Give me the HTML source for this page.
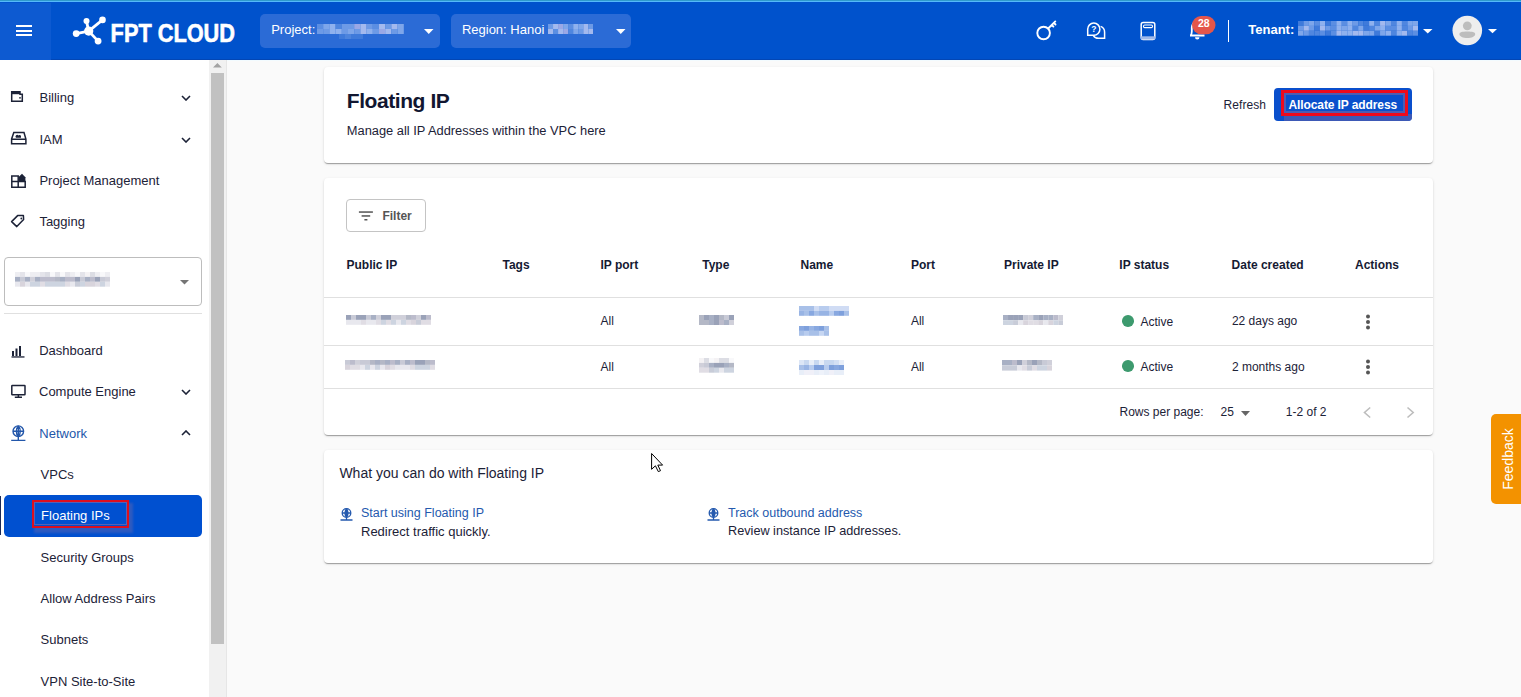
<!DOCTYPE html><html><head><meta charset="utf-8"><style>
*{margin:0;padding:0;box-sizing:border-box}
html,body{width:1521px;height:697px;overflow:hidden;background:#fafafa;font-family:"Liberation Sans",sans-serif}
.t{position:absolute;white-space:nowrap}
.r{position:absolute}
.card{position:absolute;background:#fff;border-radius:4px;box-shadow:0 2px 1px -1px rgba(0,0,0,.2),0 1px 1px 0 rgba(0,0,0,.14),0 1px 3px 0 rgba(0,0,0,.12)}
</style></head><body>
<div class="r" style="left:0px;top:0px;width:1521px;height:1px;background:#2f9acb;"></div>
<div class="r" style="left:0px;top:1px;width:1521px;height:1px;background:#55b9fa;"></div>
<div class="r" style="left:0px;top:2px;width:1521px;height:58px;background:#0052cc;"></div>
<div class="r" style="left:0px;top:59px;width:1521px;height:1px;background:#0346b4;"></div>
<div class="r" style="left:0px;top:60px;width:1521px;height:1px;background:#f2fbff;"></div>
<div class="r" style="left:0px;top:3px;width:51px;height:57px;background:#0d5ad1;"></div>
<div class="r" style="left:16px;top:25.4px;width:16px;height:2.1px;background:#fff;"></div>
<div class="r" style="left:16px;top:29.9px;width:16px;height:2.1px;background:#fff;"></div>
<div class="r" style="left:16px;top:34.2px;width:16px;height:2.1px;background:#fff;"></div>
<svg class="r" style="left:70px;top:14px" width="40" height="34" viewBox="70 14 40 34">
<g stroke="#fff" stroke-width="2.8" fill="none"><line x1="88.7" y1="31.1" x2="86.5" y2="21.1"/><line x1="88.7" y1="31.1" x2="102.5" y2="19.9"/><line x1="88.7" y1="31.1" x2="76.2" y2="33.6"/><line x1="88.7" y1="31.1" x2="98.1" y2="41.1"/></g>
<g fill="#fff"><circle cx="88.7" cy="31.1" r="4.6"/><circle cx="86.5" cy="21.1" r="3"/><circle cx="102.5" cy="19.9" r="3.3"/><circle cx="76.2" cy="33.6" r="3.4"/><circle cx="98.1" cy="41.1" r="3.4"/></g></svg>
<svg class="r" style="left:108px;top:14px" width="132" height="34"><text x="2.6" y="27.75" font-family="Liberation Sans" font-weight="700" font-size="25.5" fill="#fff" stroke="#fff" stroke-width="0.6" textLength="124.4" lengthAdjust="spacingAndGlyphs">FPT CLOUD</text></svg>
<div class="r" style="left:260px;top:14px;width:180px;height:34px;background:#2b6bd6;border-radius:5px"></div>
<div class="t" style="left:271.2px;top:22.60px;font-size:13px;line-height:13px;font-weight:400;color:#fff;">Project:</div>
<svg class="r" style="left:317px;top:23.6px" width="86.8" height="10" opacity="1.0"><rect x="0.0" y="0" width="6.2" height="5" fill="#5b8ee2"/><rect x="6.2" y="0" width="6.2" height="5" fill="#7ea6ea"/><rect x="12.4" y="0" width="6.2" height="5" fill="#8fb1ee"/><rect x="18.6" y="0" width="6.2" height="5" fill="#4f86df"/><rect x="24.8" y="0" width="6.2" height="5" fill="#6d9ae6"/><rect x="31.0" y="0" width="6.2" height="5" fill="#6d9ae6"/><rect x="37.2" y="0" width="6.2" height="5" fill="#9aa8e6"/><rect x="43.4" y="0" width="6.2" height="5" fill="#a3b9ee"/><rect x="49.6" y="0" width="6.2" height="5" fill="#6d9ae6"/><rect x="55.800000000000004" y="0" width="6.2" height="5" fill="#5b8ee2"/><rect x="62.0" y="0" width="6.2" height="5" fill="#a3b9ee"/><rect x="68.2" y="0" width="6.2" height="5" fill="#6d9ae6"/><rect x="74.4" y="0" width="6.2" height="5" fill="#a3b9ee"/><rect x="80.60000000000001" y="0" width="6.2" height="5" fill="#7ea6ea"/><rect x="0.0" y="5" width="6.2" height="5" fill="#6d9ae6"/><rect x="6.2" y="5" width="6.2" height="5" fill="#6d9ae6"/><rect x="12.4" y="5" width="6.2" height="5" fill="#8fb1ee"/><rect x="18.6" y="5" width="6.2" height="5" fill="#8fb1ee"/><rect x="24.8" y="5" width="6.2" height="5" fill="#6d9ae6"/><rect x="31.0" y="5" width="6.2" height="5" fill="#7ea6ea"/><rect x="37.2" y="5" width="6.2" height="5" fill="#6d9ae6"/><rect x="43.4" y="5" width="6.2" height="5" fill="#a3b9ee"/><rect x="49.6" y="5" width="6.2" height="5" fill="#8fb1ee"/><rect x="55.800000000000004" y="5" width="6.2" height="5" fill="#6d9ae6"/><rect x="62.0" y="5" width="6.2" height="5" fill="#9aa8e6"/><rect x="68.2" y="5" width="6.2" height="5" fill="#a3b9ee"/><rect x="74.4" y="5" width="6.2" height="5" fill="#6d9ae6"/><rect x="80.60000000000001" y="5" width="6.2" height="5" fill="#7ea6ea"/></svg>
<svg class="r" style="left:339px;top:33.6px" width="24" height="5" opacity="1.0"><rect x="0" y="0" width="6" height="5" fill="#3f7ada"/><rect x="6" y="0" width="6" height="5" fill="#4d84dd"/><rect x="12" y="0" width="6" height="5" fill="#3f7ada"/><rect x="18" y="0" width="6" height="5" fill="#3f7ada"/></svg>
<svg class="r" style="left:424px;top:29px" width="10" height="5"><path d="M0 0H9.5L4.75 5Z" fill="#fff"/></svg>
<div class="r" style="left:451px;top:14px;width:180px;height:34px;background:#2b6bd6;border-radius:5px"></div>
<div class="t" style="left:461.9px;top:22.60px;font-size:13px;line-height:13px;font-weight:400;color:#fff;">Region: Hanoi</div>
<svg class="r" style="left:547.5px;top:23.6px" width="45.449999999999996" height="10" opacity="1.0"><rect x="0.0" y="0" width="5.05" height="5" fill="#6d9ae6"/><rect x="5.05" y="0" width="5.05" height="5" fill="#a3b9ee"/><rect x="10.1" y="0" width="5.05" height="5" fill="#9aa8e6"/><rect x="15.149999999999999" y="0" width="5.05" height="5" fill="#7ea6ea"/><rect x="20.2" y="0" width="5.05" height="5" fill="#5b8ee2"/><rect x="25.25" y="0" width="5.05" height="5" fill="#8fb1ee"/><rect x="30.299999999999997" y="0" width="5.05" height="5" fill="#7ea6ea"/><rect x="35.35" y="0" width="5.05" height="5" fill="#a3b9ee"/><rect x="40.4" y="0" width="5.05" height="5" fill="#6d9ae6"/><rect x="0.0" y="5" width="5.05" height="5" fill="#a3b9ee"/><rect x="5.05" y="5" width="5.05" height="5" fill="#5b8ee2"/><rect x="10.1" y="5" width="5.05" height="5" fill="#a3b9ee"/><rect x="15.149999999999999" y="5" width="5.05" height="5" fill="#9aa8e6"/><rect x="20.2" y="5" width="5.05" height="5" fill="#4f86df"/><rect x="25.25" y="5" width="5.05" height="5" fill="#7ea6ea"/><rect x="30.299999999999997" y="5" width="5.05" height="5" fill="#6d9ae6"/><rect x="35.35" y="5" width="5.05" height="5" fill="#a3b9ee"/><rect x="40.4" y="5" width="5.05" height="5" fill="#a3b9ee"/></svg>
<svg class="r" style="left:615.5px;top:29px" width="10" height="5"><path d="M0 0H9.5L4.75 5Z" fill="#fff"/></svg>
<svg class="r" style="left:1030px;top:15px" width="90" height="32" viewBox="1030 15 90 32">
<g stroke="#fff" stroke-width="1.7" fill="none" stroke-linecap="round">
<circle cx="1043.6" cy="33" r="6.3" stroke-width="1.9"/>
<path d="M1048.2 28.5L1055.3 21.4M1051.8 25l1.6 1.6M1053.9 22.9l1.6 1.6" stroke-width="1.9"/>
</g><g stroke="#fff" stroke-width="1.5" fill="none" stroke-linejoin="miter">
<path d="M1087.7 29.2A6.1 6.1 0 1 1 1093.8 35.3H1087.7Z"/>
<path d="M1100.6 26.4A6.1 6.1 0 0 1 1104.6 32.2V38.3H1098.5A6.1 6.1 0 0 1 1093.2 35.3"/>
</g>
<text x="1093.8" y="32.4" text-anchor="middle" font-family="Liberation Sans" font-weight="700" font-size="8.5" fill="#fff">?</text>
</svg>
<svg class="r" style="left:1136px;top:17px" width="24" height="26" viewBox="1136 17 24 26">
<rect x="1141.2" y="22.5" width="13.6" height="17" rx="2" stroke="#fff" stroke-width="1.5" fill="none"/>
<rect x="1143.5" y="25" width="9" height="2.6" rx="1.2" stroke="#fff" stroke-width="1.1" fill="none"/>
<rect x="1141" y="36.3" width="14" height="3.2" fill="#9fb9ea"/>
</svg>
<svg class="r" style="left:1185px;top:14px" width="34" height="28" viewBox="1185 14 34 28">
<path d="M1190 35.5h14.5M1190.5 35.5c1 -1 1.3 -2 1.3 -4v-4c0 -3 2.5 -6 5.5 -6" stroke="#fff" stroke-width="1.8" fill="none"/>
<path d="M1195 37.2h4.5a2.25 2.25 0 0 1 -4.5 0z" fill="#fff"/>
<rect x="1192" y="16" width="23.5" height="18.2" rx="9.1" fill="#e4564b"/>
<text x="1203.8" y="27.2" text-anchor="middle" font-family="Liberation Sans" font-weight="700" font-size="10.5" fill="#fff">28</text>
</svg>
<div class="r" style="left:1227.6px;top:19.8px;width:1.5px;height:22.4px;background:#fff;"></div>
<div class="t" style="left:1248.3px;top:22.50px;font-size:13px;line-height:13px;font-weight:700;color:#fff;">Tenant:</div>
<svg class="r" style="left:1298px;top:21px" width="120.33999999999999" height="14.700000000000001" opacity="1.0"><rect x="0.0" y="0.0" width="5.47" height="4.9" fill="#3f7ada"/><rect x="5.47" y="0.0" width="5.47" height="4.9" fill="#6d9ae6"/><rect x="10.94" y="0.0" width="5.47" height="4.9" fill="#7ea6ea"/><rect x="16.41" y="0.0" width="5.47" height="4.9" fill="#5b8ee2"/><rect x="21.88" y="0.0" width="5.47" height="4.9" fill="#8fb1ee"/><rect x="27.349999999999998" y="0.0" width="5.47" height="4.9" fill="#3f7ada"/><rect x="32.82" y="0.0" width="5.47" height="4.9" fill="#5b8ee2"/><rect x="38.29" y="0.0" width="5.47" height="4.9" fill="#8fb1ee"/><rect x="43.76" y="0.0" width="5.47" height="4.9" fill="#5b8ee2"/><rect x="49.23" y="0.0" width="5.47" height="4.9" fill="#8fb1ee"/><rect x="54.699999999999996" y="0.0" width="5.47" height="4.9" fill="#6d9ae6"/><rect x="60.169999999999995" y="0.0" width="5.47" height="4.9" fill="#4f86df"/><rect x="65.64" y="0.0" width="5.47" height="4.9" fill="#3f7ada"/><rect x="71.11" y="0.0" width="5.47" height="4.9" fill="#8fb1ee"/><rect x="76.58" y="0.0" width="5.47" height="4.9" fill="#4f86df"/><rect x="82.05" y="0.0" width="5.47" height="4.9" fill="#a3b9ee"/><rect x="87.52" y="0.0" width="5.47" height="4.9" fill="#7ea6ea"/><rect x="92.99" y="0.0" width="5.47" height="4.9" fill="#4f86df"/><rect x="98.46" y="0.0" width="5.47" height="4.9" fill="#8fb1ee"/><rect x="103.92999999999999" y="0.0" width="5.47" height="4.9" fill="#4f86df"/><rect x="109.39999999999999" y="0.0" width="5.47" height="4.9" fill="#7ea6ea"/><rect x="114.86999999999999" y="0.0" width="5.47" height="4.9" fill="#7ea6ea"/><rect x="0.0" y="4.9" width="5.47" height="4.9" fill="#6d9ae6"/><rect x="5.47" y="4.9" width="5.47" height="4.9" fill="#a3b9ee"/><rect x="10.94" y="4.9" width="5.47" height="4.9" fill="#6d9ae6"/><rect x="16.41" y="4.9" width="5.47" height="4.9" fill="#3f7ada"/><rect x="21.88" y="4.9" width="5.47" height="4.9" fill="#a3b9ee"/><rect x="27.349999999999998" y="4.9" width="5.47" height="4.9" fill="#6d9ae6"/><rect x="32.82" y="4.9" width="5.47" height="4.9" fill="#5b8ee2"/><rect x="38.29" y="4.9" width="5.47" height="4.9" fill="#8fb1ee"/><rect x="43.76" y="4.9" width="5.47" height="4.9" fill="#7ea6ea"/><rect x="49.23" y="4.9" width="5.47" height="4.9" fill="#8fb1ee"/><rect x="54.699999999999996" y="4.9" width="5.47" height="4.9" fill="#4f86df"/><rect x="60.169999999999995" y="4.9" width="5.47" height="4.9" fill="#7ea6ea"/><rect x="65.64" y="4.9" width="5.47" height="4.9" fill="#3f7ada"/><rect x="71.11" y="4.9" width="5.47" height="4.9" fill="#4f86df"/><rect x="76.58" y="4.9" width="5.47" height="4.9" fill="#7ea6ea"/><rect x="82.05" y="4.9" width="5.47" height="4.9" fill="#8fb1ee"/><rect x="87.52" y="4.9" width="5.47" height="4.9" fill="#5b8ee2"/><rect x="92.99" y="4.9" width="5.47" height="4.9" fill="#5b8ee2"/><rect x="98.46" y="4.9" width="5.47" height="4.9" fill="#8fb1ee"/><rect x="103.92999999999999" y="4.9" width="5.47" height="4.9" fill="#4f86df"/><rect x="109.39999999999999" y="4.9" width="5.47" height="4.9" fill="#6d9ae6"/><rect x="114.86999999999999" y="4.9" width="5.47" height="4.9" fill="#a3b9ee"/><rect x="0.0" y="9.8" width="5.47" height="4.9" fill="#7ea6ea"/><rect x="5.47" y="9.8" width="5.47" height="4.9" fill="#6d9ae6"/><rect x="10.94" y="9.8" width="5.47" height="4.9" fill="#4f86df"/><rect x="16.41" y="9.8" width="5.47" height="4.9" fill="#4f86df"/><rect x="21.88" y="9.8" width="5.47" height="4.9" fill="#5b8ee2"/><rect x="27.349999999999998" y="9.8" width="5.47" height="4.9" fill="#3f7ada"/><rect x="32.82" y="9.8" width="5.47" height="4.9" fill="#5b8ee2"/><rect x="38.29" y="9.8" width="5.47" height="4.9" fill="#a3b9ee"/><rect x="43.76" y="9.8" width="5.47" height="4.9" fill="#8fb1ee"/><rect x="49.23" y="9.8" width="5.47" height="4.9" fill="#8fb1ee"/><rect x="54.699999999999996" y="9.8" width="5.47" height="4.9" fill="#a3b9ee"/><rect x="60.169999999999995" y="9.8" width="5.47" height="4.9" fill="#a3b9ee"/><rect x="65.64" y="9.8" width="5.47" height="4.9" fill="#7ea6ea"/><rect x="71.11" y="9.8" width="5.47" height="4.9" fill="#7ea6ea"/><rect x="76.58" y="9.8" width="5.47" height="4.9" fill="#3f7ada"/><rect x="82.05" y="9.8" width="5.47" height="4.9" fill="#7ea6ea"/><rect x="87.52" y="9.8" width="5.47" height="4.9" fill="#8fb1ee"/><rect x="92.99" y="9.8" width="5.47" height="4.9" fill="#4f86df"/><rect x="98.46" y="9.8" width="5.47" height="4.9" fill="#8fb1ee"/><rect x="103.92999999999999" y="9.8" width="5.47" height="4.9" fill="#a3b9ee"/><rect x="109.39999999999999" y="9.8" width="5.47" height="4.9" fill="#4f86df"/><rect x="114.86999999999999" y="9.8" width="5.47" height="4.9" fill="#5b8ee2"/></svg>
<svg class="r" style="left:1422.5px;top:29.2px" width="10" height="5"><path d="M0 0H9.5L4.75 4.5Z" fill="#fff"/></svg>
<svg class="r" style="left:1452px;top:15px" width="31" height="31" viewBox="1452 15 31 31">
<circle cx="1467.3" cy="30.5" r="14.8" fill="#eeeeee"/>
<circle cx="1467.3" cy="25.8" r="4.4" fill="#bdbdbd"/>
<path d="M1459.4 34.2c0 -2 3 -2.6 7.9 -2.6s7.9 .6 7.9 2.6c0 2 -3.5 3.8 -7.9 3.8s-7.9 -1.8 -7.9 -3.8z" fill="#bdbdbd"/>
</svg>
<svg class="r" style="left:1488.3px;top:29.3px" width="10" height="5"><path d="M0 0H9L4.5 4.3Z" fill="#fff"/></svg>
<div class="r" style="left:0px;top:60px;width:209px;height:637px;background:#fff;"></div>
<div class="r" style="left:209px;top:60px;width:17px;height:637px;background:#f1f1f1;"></div>
<div class="r" style="left:226px;top:60px;width:1px;height:637px;background:#e6e6e6;"></div>
<div class="r" style="left:211px;top:73px;width:13px;height:571px;background:#c1c1c1;"></div>
<svg class="r" style="left:213px;top:62.8px" width="9" height="5"><path d="M0 4.4L4.4 0L8.8 4.4Z" fill="#a3a3a3"/></svg>
<div class="t" style="left:39.5px;top:90.80px;font-size:13px;line-height:13px;font-weight:400;color:#1c2237;">Billing</div>
<svg class="r" style="left:180.9px;top:95.3px" width="10" height="6"><path d="M1 1L5 5L9 1" stroke="#1c2237" stroke-width="1.6" fill="none"/></svg>
<div class="t" style="left:39.5px;top:132.70px;font-size:13px;line-height:13px;font-weight:400;color:#1c2237;">IAM</div>
<svg class="r" style="left:180.9px;top:137.2px" width="10" height="6"><path d="M1 1L5 5L9 1" stroke="#1c2237" stroke-width="1.6" fill="none"/></svg>
<div class="t" style="left:39.4px;top:174.00px;font-size:13px;line-height:13px;font-weight:400;color:#1c2237;">Project Management</div>
<div class="t" style="left:39.4px;top:215.20px;font-size:13px;line-height:13px;font-weight:400;color:#1c2237;">Tagging</div>
<svg class="r" style="left:8px;top:86px" width="22" height="150" viewBox="8 86 22 150">
<g stroke="#1c2237" stroke-width="1.5" fill="none">
<path d="M11.7 91.7h8.3v2.6h2.3v7h-10.6z"/>
<path d="M13.8 132.6h10.2l1.9 6.4v4.7h-14.3v-4.7z M11.6 139.2h14.3"/>
<path d="M11.8 176h6.4v11.2h-6.4zM11.8 181.4h13.4v5.8h-7v-10"/>
<path d="M11.6 221.6L17.6 215.6H23.4L23.6 219.6L16.8 226.6Z" stroke-linejoin="round"/>
</g>
<rect x="11.8" y="91.8" width="8.2" height="2.4" fill="#1c2237"/>
<circle cx="20" cy="97.8" r=".9" fill="#1c2237"/>
<path d="M16 137.8h5v-1.4a1.5 1.5 0 0 0 -2.5 -1a1.6 1.6 0 0 0 -2.5 2.4z" fill="#1c2237"/>
<path d="M18.6 181.5v-4.6l3.4 -3.1 3.4 3.4v4.3z" fill="#1c2237"/>
<circle cx="21.3" cy="218.5" r=".9" fill="#1c2237"/>
</svg>
<div class="r" style="left:4px;top:257px;width:198px;height:49px;background:#fff;border:1px solid #bdbdbd;border-radius:4px"></div>
<svg class="r" style="left:15.2px;top:272px" width="95" height="14.700000000000001" opacity="1.0"><rect x="0" y="0.0" width="5" height="4.9" fill="#eeeef2"/><rect x="5" y="0.0" width="5" height="4.9" fill="#e4e4ea"/><rect x="10" y="0.0" width="5" height="4.9" fill="#f8f8fa"/><rect x="15" y="0.0" width="5" height="4.9" fill="#eeeef2"/><rect x="20" y="0.0" width="5" height="4.9" fill="#eeeef2"/><rect x="25" y="0.0" width="5" height="4.9" fill="#e4e4ea"/><rect x="30" y="0.0" width="5" height="4.9" fill="#dcdde4"/><rect x="35" y="0.0" width="5" height="4.9" fill="#f8f8fa"/><rect x="40" y="0.0" width="5" height="4.9" fill="#e4e4ea"/><rect x="45" y="0.0" width="5" height="4.9" fill="#f8f8fa"/><rect x="50" y="0.0" width="5" height="4.9" fill="#e4e4ea"/><rect x="55" y="0.0" width="5" height="4.9" fill="#eeeef2"/><rect x="60" y="0.0" width="5" height="4.9" fill="#f8f8fa"/><rect x="65" y="0.0" width="5" height="4.9" fill="#e4e4ea"/><rect x="70" y="0.0" width="5" height="4.9" fill="#f4f2f4"/><rect x="75" y="0.0" width="5" height="4.9" fill="#dcdde4"/><rect x="80" y="0.0" width="5" height="4.9" fill="#eeeef2"/><rect x="85" y="0.0" width="5" height="4.9" fill="#f8f8fa"/><rect x="90" y="0.0" width="5" height="4.9" fill="#eeeef2"/><rect x="0" y="4.9" width="5" height="4.9" fill="#a8b0c4"/><rect x="5" y="4.9" width="5" height="4.9" fill="#c8cad6"/><rect x="10" y="4.9" width="5" height="4.9" fill="#a8b0c4"/><rect x="15" y="4.9" width="5" height="4.9" fill="#d0d0da"/><rect x="20" y="4.9" width="5" height="4.9" fill="#a8b0c4"/><rect x="25" y="4.9" width="5" height="4.9" fill="#bcbccc"/><rect x="30" y="4.9" width="5" height="4.9" fill="#bcbccc"/><rect x="35" y="4.9" width="5" height="4.9" fill="#bcbccc"/><rect x="40" y="4.9" width="5" height="4.9" fill="#b4b8c6"/><rect x="45" y="4.9" width="5" height="4.9" fill="#a8b0c4"/><rect x="50" y="4.9" width="5" height="4.9" fill="#bcbccc"/><rect x="55" y="4.9" width="5" height="4.9" fill="#bcbccc"/><rect x="60" y="4.9" width="5" height="4.9" fill="#9aa2b8"/><rect x="65" y="4.9" width="5" height="4.9" fill="#c8cad6"/><rect x="70" y="4.9" width="5" height="4.9" fill="#a8b0c4"/><rect x="75" y="4.9" width="5" height="4.9" fill="#bcbccc"/><rect x="80" y="4.9" width="5" height="4.9" fill="#9aa2b8"/><rect x="85" y="4.9" width="5" height="4.9" fill="#c8cad6"/><rect x="90" y="4.9" width="5" height="4.9" fill="#d0d0da"/><rect x="0" y="9.8" width="5" height="4.9" fill="#e8e8ee"/><rect x="5" y="9.8" width="5" height="4.9" fill="#d8d4dc"/><rect x="10" y="9.8" width="5" height="4.9" fill="#e8e8ee"/><rect x="15" y="9.8" width="5" height="4.9" fill="#cdd4e0"/><rect x="20" y="9.8" width="5" height="4.9" fill="#cdd4e0"/><rect x="25" y="9.8" width="5" height="4.9" fill="#e0dde4"/><rect x="30" y="9.8" width="5" height="4.9" fill="#cdd4e0"/><rect x="35" y="9.8" width="5" height="4.9" fill="#cdd4e0"/><rect x="40" y="9.8" width="5" height="4.9" fill="#cdd4e0"/><rect x="45" y="9.8" width="5" height="4.9" fill="#cdd4e0"/><rect x="50" y="9.8" width="5" height="4.9" fill="#e0dde4"/><rect x="55" y="9.8" width="5" height="4.9" fill="#e8e8ee"/><rect x="60" y="9.8" width="5" height="4.9" fill="#c8ccd8"/><rect x="65" y="9.8" width="5" height="4.9" fill="#cdd4e0"/><rect x="70" y="9.8" width="5" height="4.9" fill="#d8d4dc"/><rect x="75" y="9.8" width="5" height="4.9" fill="#d8d4dc"/><rect x="80" y="9.8" width="5" height="4.9" fill="#e0dde4"/><rect x="85" y="9.8" width="5" height="4.9" fill="#cdd4e0"/><rect x="90" y="9.8" width="5" height="4.9" fill="#e8e8ee"/></svg>
<svg class="r" style="left:180px;top:280px" width="10" height="5"><path d="M0 0H9L4.5 4.4Z" fill="#757575"/></svg>
<div class="r" style="left:4px;top:313px;width:198px;height:1px;background:#e0e0e0;"></div>
<div class="t" style="left:39.2px;top:344.00px;font-size:13px;line-height:13px;font-weight:400;color:#1c2237;">Dashboard</div>
<div class="t" style="left:39px;top:385.30px;font-size:13px;line-height:13px;font-weight:400;color:#1c2237;">Compute Engine</div>
<svg class="r" style="left:181px;top:389.2px" width="10" height="6"><path d="M1 1L5 5L9 1" stroke="#1c2237" stroke-width="1.6" fill="none"/></svg>
<div class="t" style="left:39.3px;top:427.00px;font-size:13px;line-height:13px;font-weight:400;color:#2357aa;">Network</div>
<svg class="r" style="left:181px;top:430px" width="10" height="6"><path d="M1 5L5 1L9 5" stroke="#1c2237" stroke-width="1.6" fill="none"/></svg>
<svg class="r" style="left:8px;top:342px" width="22" height="102" viewBox="8 342 22 102">
<g fill="#1c2237"><rect x="12" y="351" width="2" height="5"/><rect x="15.5" y="348.5" width="2" height="7.5"/><rect x="19" y="346" width="2" height="10"/><rect x="11.5" y="356.3" width="13" height="1.3"/></g>
<g stroke="#1c2237" stroke-width="1.5" fill="none"><rect x="11.8" y="385.6" width="13.2" height="9.2" rx=".5"/><path d="M18.4 394.8v2.2M14.8 397.2h7.2"/></g>
<g stroke="#2357aa" stroke-width="1.4" fill="none"><circle cx="18.3" cy="431.2" r="5.3"/><path d="M18.3 425.9v10.6M13 431.2h10.6M18.3 425.9c-2.6 2.5 -2.6 8.1 0 10.6M18.3 425.9c2.6 2.5 2.6 8.1 0 10.6M18.3 436.5v3.6M11.2 440.4h14.2"/></g>
</svg>
<div class="t" style="left:40.6px;top:467.70px;font-size:13px;line-height:13px;font-weight:400;color:#1c2237;">VPCs</div>
<div class="r" style="left:4px;top:495px;width:198px;height:41.5px;background:#0050d0;border-radius:5px"></div>
<div class="r" style="left:0px;top:496px;width:1px;height:39px;background:#1c2a55;"></div>
<div class="r" style="left:34px;top:503px;width:99px;height:29.5px;background:rgba(90,100,175,.5);filter:blur(.8px)"></div>
<div class="r" style="left:31.6px;top:499.6px;width:97.8px;height:28.6px;background:#0050d0;border:2.8px solid #dc0f1e"></div>
<div class="r" style="left:34.4px;top:502.4px;width:92.2px;height:23px;background:transparent;border:1.5px solid #5561b3"></div>
<div class="t" style="left:41.1px;top:508.70px;font-size:13px;line-height:13px;font-weight:400;color:#fff;">Floating IPs</div>
<div class="t" style="left:40.6px;top:550.60px;font-size:13px;line-height:13px;font-weight:400;color:#1c2237;">Security Groups</div>
<div class="t" style="left:40.6px;top:592.40px;font-size:13px;line-height:13px;font-weight:400;color:#1c2237;">Allow Address Pairs</div>
<div class="t" style="left:40.6px;top:633.00px;font-size:13px;line-height:13px;font-weight:400;color:#1c2237;">Subnets</div>
<div class="t" style="left:40.6px;top:675.00px;font-size:13px;line-height:13px;font-weight:400;color:#1c2237;">VPN Site-to-Site</div>
<div class="card" style="left:324px;top:67px;width:1109px;height:96px"></div>
<div class="t" style="left:346.8px;top:90.22px;font-size:21px;line-height:21px;font-weight:700;color:#111630;letter-spacing:-0.43px">Floating IP</div>
<div class="t" style="left:346.8px;top:124.92px;font-size:12.85px;line-height:12.85px;font-weight:400;color:#1c2237;">Manage all IP Addresses within the VPC here</div>
<div class="t" style="left:1223.6px;top:98.74px;font-size:12px;line-height:12px;font-weight:400;color:#1c2237;letter-spacing:0.05px">Refresh</div>
<div class="r" style="left:1274px;top:88px;width:138px;height:33px;background:#0a4fcc;border-radius:4px"></div>
<div class="r" style="left:1284px;top:114px;width:128px;height:7px;background:rgba(70,90,178,.85);border-radius:0 0 4px 0"></div>
<div class="r" style="left:1281px;top:90px;width:127px;height:26px;background:#0a50cc;border:3px solid #ee0a1c"></div>
<div class="r" style="left:1284px;top:93px;width:121px;height:20px;background:transparent;border:2px solid #4e5db2"></div>
<div class="t" style="left:1288.5px;top:99.14px;font-size:12px;line-height:12px;font-weight:700;color:#fff;letter-spacing:-0.1px">Allocate IP address</div>
<div class="card" style="left:324px;top:178px;width:1109px;height:257px"></div>
<div class="r" style="left:346px;top:199px;width:80px;height:33px;background:#fff;border:1px solid #c4c4c4;border-radius:4px"></div>
<svg class="r" style="left:358px;top:210px" width="16" height="12"><g fill="#555"><rect x="0.9" y="1.3" width="14" height="1.5"/><rect x="3.6" y="5.2" width="8.6" height="1.5"/><rect x="6.4" y="9" width="3" height="1.5"/></g></svg>
<div class="t" style="left:382.4px;top:209.54px;font-size:12px;line-height:12px;font-weight:700;color:#555;">Filter</div>
<div class="t" style="left:346.5px;top:258.84px;font-size:12px;line-height:12px;font-weight:700;color:#151a33;">Public IP</div>
<div class="t" style="left:502.5px;top:258.84px;font-size:12px;line-height:12px;font-weight:700;color:#151a33;">Tags</div>
<div class="t" style="left:600.5px;top:258.84px;font-size:12px;line-height:12px;font-weight:700;color:#151a33;">IP port</div>
<div class="t" style="left:702.2px;top:258.84px;font-size:12px;line-height:12px;font-weight:700;color:#151a33;">Type</div>
<div class="t" style="left:800.5px;top:258.84px;font-size:12px;line-height:12px;font-weight:700;color:#151a33;">Name</div>
<div class="t" style="left:910.9px;top:258.84px;font-size:12px;line-height:12px;font-weight:700;color:#151a33;">Port</div>
<div class="t" style="left:1004px;top:258.84px;font-size:12px;line-height:12px;font-weight:700;color:#151a33;">Private IP</div>
<div class="t" style="left:1119.3px;top:258.84px;font-size:12px;line-height:12px;font-weight:700;color:#151a33;">IP status</div>
<div class="t" style="left:1231.6px;top:258.84px;font-size:12px;line-height:12px;font-weight:700;color:#151a33;">Date created</div>
<div class="t" style="left:1355px;top:258.84px;font-size:12px;line-height:12px;font-weight:700;color:#151a33;">Actions</div>
<div class="r" style="left:324px;top:296.8px;width:1109px;height:1.2px;background:#e0e0e0;"></div>
<div class="r" style="left:324px;top:345px;width:1109px;height:1.2px;background:#e0e0e0;"></div>
<div class="r" style="left:324px;top:388px;width:1109px;height:1.2px;background:#e0e0e0;"></div>
<svg class="r" style="left:346px;top:315px" width="85" height="9.8" opacity="1.0"><rect x="0" y="0.0" width="5" height="4.9" fill="#9aa2b8"/><rect x="5" y="0.0" width="5" height="4.9" fill="#c8cad6"/><rect x="10" y="0.0" width="5" height="4.9" fill="#9aa2b8"/><rect x="15" y="0.0" width="5" height="4.9" fill="#9aa2b8"/><rect x="20" y="0.0" width="5" height="4.9" fill="#c8cad6"/><rect x="25" y="0.0" width="5" height="4.9" fill="#a8b0c4"/><rect x="30" y="0.0" width="5" height="4.9" fill="#d0d0da"/><rect x="35" y="0.0" width="5" height="4.9" fill="#9aa2b8"/><rect x="40" y="0.0" width="5" height="4.9" fill="#9aa2b8"/><rect x="45" y="0.0" width="5" height="4.9" fill="#d0d0da"/><rect x="50" y="0.0" width="5" height="4.9" fill="#d0d0da"/><rect x="55" y="0.0" width="5" height="4.9" fill="#d0d0da"/><rect x="60" y="0.0" width="5" height="4.9" fill="#b4b8c6"/><rect x="65" y="0.0" width="5" height="4.9" fill="#bcbccc"/><rect x="70" y="0.0" width="5" height="4.9" fill="#d0d0da"/><rect x="75" y="0.0" width="5" height="4.9" fill="#9aa2b8"/><rect x="80" y="0.0" width="5" height="4.9" fill="#bcbccc"/><rect x="0" y="4.9" width="5" height="4.9" fill="#e8e8ee"/><rect x="5" y="4.9" width="5" height="4.9" fill="#e8e8ee"/><rect x="10" y="4.9" width="5" height="4.9" fill="#e8e8ee"/><rect x="15" y="4.9" width="5" height="4.9" fill="#e0dde4"/><rect x="20" y="4.9" width="5" height="4.9" fill="#e8e8ee"/><rect x="25" y="4.9" width="5" height="4.9" fill="#e8e8ee"/><rect x="30" y="4.9" width="5" height="4.9" fill="#e0dde4"/><rect x="35" y="4.9" width="5" height="4.9" fill="#cdd4e0"/><rect x="40" y="4.9" width="5" height="4.9" fill="#e0dde4"/><rect x="45" y="4.9" width="5" height="4.9" fill="#cdd4e0"/><rect x="50" y="4.9" width="5" height="4.9" fill="#e8e8ee"/><rect x="55" y="4.9" width="5" height="4.9" fill="#cdd4e0"/><rect x="60" y="4.9" width="5" height="4.9" fill="#e0dde4"/><rect x="65" y="4.9" width="5" height="4.9" fill="#d8d4dc"/><rect x="70" y="4.9" width="5" height="4.9" fill="#c8ccd8"/><rect x="75" y="4.9" width="5" height="4.9" fill="#e0dde4"/><rect x="80" y="4.9" width="5" height="4.9" fill="#e0dde4"/></svg>
<div class="t" style="left:600.5px;top:314.84px;font-size:12px;line-height:12px;font-weight:400;color:#1c2237;">All</div>
<svg class="r" style="left:699px;top:315px" width="35" height="10" opacity="1.0"><rect x="0" y="0" width="5" height="5" fill="#b4b8c6"/><rect x="5" y="0" width="5" height="5" fill="#9aa2b8"/><rect x="10" y="0" width="5" height="5" fill="#a8b0c4"/><rect x="15" y="0" width="5" height="5" fill="#9aa2b8"/><rect x="20" y="0" width="5" height="5" fill="#b4b8c6"/><rect x="25" y="0" width="5" height="5" fill="#c8cad6"/><rect x="30" y="0" width="5" height="5" fill="#9aa2b8"/><rect x="0" y="5" width="5" height="5" fill="#b4b8c6"/><rect x="5" y="5" width="5" height="5" fill="#b4b8c6"/><rect x="10" y="5" width="5" height="5" fill="#a8b0c4"/><rect x="15" y="5" width="5" height="5" fill="#9aa2b8"/><rect x="20" y="5" width="5" height="5" fill="#bcbccc"/><rect x="25" y="5" width="5" height="5" fill="#a8b0c4"/><rect x="30" y="5" width="5" height="5" fill="#d0d0da"/></svg>
<svg class="r" style="left:799px;top:306px" width="50" height="9.8" opacity="1.0"><rect x="0" y="0.0" width="5" height="4.9" fill="#a8c0e8"/><rect x="5" y="0.0" width="5" height="4.9" fill="#a8c0e8"/><rect x="10" y="0.0" width="5" height="4.9" fill="#a8c0e8"/><rect x="15" y="0.0" width="5" height="4.9" fill="#d0dcf4"/><rect x="20" y="0.0" width="5" height="4.9" fill="#b8ccee"/><rect x="25" y="0.0" width="5" height="4.9" fill="#b8ccee"/><rect x="30" y="0.0" width="5" height="4.9" fill="#d0dcf4"/><rect x="35" y="0.0" width="5" height="4.9" fill="#d0dcf4"/><rect x="40" y="0.0" width="5" height="4.9" fill="#d0dcf4"/><rect x="45" y="0.0" width="5" height="4.9" fill="#d0dcf4"/><rect x="0" y="4.9" width="5" height="4.9" fill="#98b4e4"/><rect x="5" y="4.9" width="5" height="4.9" fill="#a8c0e8"/><rect x="10" y="4.9" width="5" height="4.9" fill="#88a8e0"/><rect x="15" y="4.9" width="5" height="4.9" fill="#a8c0e8"/><rect x="20" y="4.9" width="5" height="4.9" fill="#98b4e4"/><rect x="25" y="4.9" width="5" height="4.9" fill="#98b4e4"/><rect x="30" y="4.9" width="5" height="4.9" fill="#b8ccee"/><rect x="35" y="4.9" width="5" height="4.9" fill="#88a8e0"/><rect x="40" y="4.9" width="5" height="4.9" fill="#7ea0dc"/><rect x="45" y="4.9" width="5" height="4.9" fill="#a8c0e8"/></svg>
<svg class="r" style="left:799px;top:326px" width="30" height="9.8" opacity="1.0"><rect x="0" y="0.0" width="5" height="4.9" fill="#88a8e0"/><rect x="5" y="0.0" width="5" height="4.9" fill="#7ea0dc"/><rect x="10" y="0.0" width="5" height="4.9" fill="#98b4e4"/><rect x="15" y="0.0" width="5" height="4.9" fill="#88a8e0"/><rect x="20" y="0.0" width="5" height="4.9" fill="#7ea0dc"/><rect x="25" y="0.0" width="5" height="4.9" fill="#a8c0e8"/><rect x="0" y="4.9" width="5" height="4.9" fill="#a8c0e8"/><rect x="5" y="4.9" width="5" height="4.9" fill="#b8ccee"/><rect x="10" y="4.9" width="5" height="4.9" fill="#a8c0e8"/><rect x="15" y="4.9" width="5" height="4.9" fill="#a8c0e8"/><rect x="20" y="4.9" width="5" height="4.9" fill="#c6d6f2"/><rect x="25" y="4.9" width="5" height="4.9" fill="#a8c0e8"/></svg>
<div class="t" style="left:910.9px;top:314.84px;font-size:12px;line-height:12px;font-weight:400;color:#1c2237;">All</div>
<svg class="r" style="left:1002.6px;top:314.7px" width="60.36" height="10.6" opacity="1.0"><rect x="0.0" y="0.0" width="5.03" height="5.3" fill="#a8b0c4"/><rect x="5.03" y="0.0" width="5.03" height="5.3" fill="#9aa2b8"/><rect x="10.06" y="0.0" width="5.03" height="5.3" fill="#9aa2b8"/><rect x="15.09" y="0.0" width="5.03" height="5.3" fill="#9aa2b8"/><rect x="20.12" y="0.0" width="5.03" height="5.3" fill="#c8cad6"/><rect x="25.150000000000002" y="0.0" width="5.03" height="5.3" fill="#d0d0da"/><rect x="30.18" y="0.0" width="5.03" height="5.3" fill="#a8b0c4"/><rect x="35.21" y="0.0" width="5.03" height="5.3" fill="#9aa2b8"/><rect x="40.24" y="0.0" width="5.03" height="5.3" fill="#a8b0c4"/><rect x="45.27" y="0.0" width="5.03" height="5.3" fill="#a8b0c4"/><rect x="50.300000000000004" y="0.0" width="5.03" height="5.3" fill="#bcbccc"/><rect x="55.330000000000005" y="0.0" width="5.03" height="5.3" fill="#d0d0da"/><rect x="0.0" y="5.3" width="5.03" height="5.3" fill="#cdd4e0"/><rect x="5.03" y="5.3" width="5.03" height="5.3" fill="#cdd4e0"/><rect x="10.06" y="5.3" width="5.03" height="5.3" fill="#c8ccd8"/><rect x="15.09" y="5.3" width="5.03" height="5.3" fill="#e8e8ee"/><rect x="20.12" y="5.3" width="5.03" height="5.3" fill="#d8d4dc"/><rect x="25.150000000000002" y="5.3" width="5.03" height="5.3" fill="#e0dde4"/><rect x="30.18" y="5.3" width="5.03" height="5.3" fill="#e0dde4"/><rect x="35.21" y="5.3" width="5.03" height="5.3" fill="#d8d4dc"/><rect x="40.24" y="5.3" width="5.03" height="5.3" fill="#e8e8ee"/><rect x="45.27" y="5.3" width="5.03" height="5.3" fill="#d8d4dc"/><rect x="50.300000000000004" y="5.3" width="5.03" height="5.3" fill="#cdd4e0"/><rect x="55.330000000000005" y="5.3" width="5.03" height="5.3" fill="#c8ccd8"/></svg>
<div class="r" style="left:1122px;top:315px;width:11.7px;height:11.7px;border-radius:50%;background:#3d9a6e"></div>
<div class="t" style="left:1140.4px;top:315.64px;font-size:12px;line-height:12px;font-weight:400;color:#1c2237;">Active</div>
<div class="t" style="left:1231.9px;top:315.14px;font-size:12px;line-height:12px;font-weight:400;color:#1c2237;">22 days ago</div>
<svg class="r" style="left:1364px;top:313px" width="8" height="18"><g fill="#555"><circle cx="4" cy="3.5" r="2"/><circle cx="4" cy="9" r="2"/><circle cx="4" cy="14.4" r="2"/></g></svg>
<svg class="r" style="left:345.2px;top:360px" width="90" height="9.8" opacity="1.0"><rect x="0" y="0.0" width="5" height="4.9" fill="#c8cad6"/><rect x="5" y="0.0" width="5" height="4.9" fill="#bcbccc"/><rect x="10" y="0.0" width="5" height="4.9" fill="#d0d0da"/><rect x="15" y="0.0" width="5" height="4.9" fill="#c8cad6"/><rect x="20" y="0.0" width="5" height="4.9" fill="#c8cad6"/><rect x="25" y="0.0" width="5" height="4.9" fill="#b4b8c6"/><rect x="30" y="0.0" width="5" height="4.9" fill="#a8b0c4"/><rect x="35" y="0.0" width="5" height="4.9" fill="#b4b8c6"/><rect x="40" y="0.0" width="5" height="4.9" fill="#a8b0c4"/><rect x="45" y="0.0" width="5" height="4.9" fill="#bcbccc"/><rect x="50" y="0.0" width="5" height="4.9" fill="#a8b0c4"/><rect x="55" y="0.0" width="5" height="4.9" fill="#c8cad6"/><rect x="60" y="0.0" width="5" height="4.9" fill="#a8b0c4"/><rect x="65" y="0.0" width="5" height="4.9" fill="#bcbccc"/><rect x="70" y="0.0" width="5" height="4.9" fill="#9aa2b8"/><rect x="75" y="0.0" width="5" height="4.9" fill="#9aa2b8"/><rect x="80" y="0.0" width="5" height="4.9" fill="#b4b8c6"/><rect x="85" y="0.0" width="5" height="4.9" fill="#bcbccc"/><rect x="0" y="4.9" width="5" height="4.9" fill="#d8d4dc"/><rect x="5" y="4.9" width="5" height="4.9" fill="#e0dde4"/><rect x="10" y="4.9" width="5" height="4.9" fill="#e0dde4"/><rect x="15" y="4.9" width="5" height="4.9" fill="#e8e8ee"/><rect x="20" y="4.9" width="5" height="4.9" fill="#cdd4e0"/><rect x="25" y="4.9" width="5" height="4.9" fill="#e8e8ee"/><rect x="30" y="4.9" width="5" height="4.9" fill="#cdd4e0"/><rect x="35" y="4.9" width="5" height="4.9" fill="#e8e8ee"/><rect x="40" y="4.9" width="5" height="4.9" fill="#d8d4dc"/><rect x="45" y="4.9" width="5" height="4.9" fill="#e0dde4"/><rect x="50" y="4.9" width="5" height="4.9" fill="#e8e8ee"/><rect x="55" y="4.9" width="5" height="4.9" fill="#e8e8ee"/><rect x="60" y="4.9" width="5" height="4.9" fill="#e8e8ee"/><rect x="65" y="4.9" width="5" height="4.9" fill="#e0dde4"/><rect x="70" y="4.9" width="5" height="4.9" fill="#cdd4e0"/><rect x="75" y="4.9" width="5" height="4.9" fill="#cdd4e0"/><rect x="80" y="4.9" width="5" height="4.9" fill="#cdd4e0"/><rect x="85" y="4.9" width="5" height="4.9" fill="#e0dde4"/></svg>
<div class="t" style="left:600.5px;top:360.64px;font-size:12px;line-height:12px;font-weight:400;color:#1c2237;">All</div>
<svg class="r" style="left:699px;top:358px" width="35" height="14.700000000000001" opacity="1.0"><rect x="0" y="0.0" width="5" height="4.9" fill="#f4f2f4"/><rect x="5" y="0.0" width="5" height="4.9" fill="#dcdde4"/><rect x="10" y="0.0" width="5" height="4.9" fill="#f8f8fa"/><rect x="15" y="0.0" width="5" height="4.9" fill="#f4f2f4"/><rect x="20" y="0.0" width="5" height="4.9" fill="#dcdde4"/><rect x="25" y="0.0" width="5" height="4.9" fill="#dcdde4"/><rect x="30" y="0.0" width="5" height="4.9" fill="#f8f8fa"/><rect x="0" y="4.9" width="5" height="4.9" fill="#d0d0da"/><rect x="5" y="4.9" width="5" height="4.9" fill="#c8cad6"/><rect x="10" y="4.9" width="5" height="4.9" fill="#a8b0c4"/><rect x="15" y="4.9" width="5" height="4.9" fill="#9aa2b8"/><rect x="20" y="4.9" width="5" height="4.9" fill="#9aa2b8"/><rect x="25" y="4.9" width="5" height="4.9" fill="#a8b0c4"/><rect x="30" y="4.9" width="5" height="4.9" fill="#b4b8c6"/><rect x="0" y="9.8" width="5" height="4.9" fill="#e0dde4"/><rect x="5" y="9.8" width="5" height="4.9" fill="#e0dde4"/><rect x="10" y="9.8" width="5" height="4.9" fill="#c8ccd8"/><rect x="15" y="9.8" width="5" height="4.9" fill="#cdd4e0"/><rect x="20" y="9.8" width="5" height="4.9" fill="#e8e8ee"/><rect x="25" y="9.8" width="5" height="4.9" fill="#cdd4e0"/><rect x="30" y="9.8" width="5" height="4.9" fill="#cdd4e0"/></svg>
<svg class="r" style="left:799px;top:360px" width="45" height="10" opacity="1.0"><rect x="0" y="0" width="5" height="5" fill="#dce6f6"/><rect x="5" y="0" width="5" height="5" fill="#c8d8f0"/><rect x="10" y="0" width="5" height="5" fill="#e8eef8"/><rect x="15" y="0" width="5" height="5" fill="#c8d8f0"/><rect x="20" y="0" width="5" height="5" fill="#e8eef8"/><rect x="25" y="0" width="5" height="5" fill="#c8d8f0"/><rect x="30" y="0" width="5" height="5" fill="#c8d8f0"/><rect x="35" y="0" width="5" height="5" fill="#d4e0f4"/><rect x="40" y="0" width="5" height="5" fill="#e8eef8"/><rect x="0" y="5" width="5" height="5" fill="#a8c0e8"/><rect x="5" y="5" width="5" height="5" fill="#98b4e4"/><rect x="10" y="5" width="5" height="5" fill="#b8ccee"/><rect x="15" y="5" width="5" height="5" fill="#7ea0dc"/><rect x="20" y="5" width="5" height="5" fill="#7ea0dc"/><rect x="25" y="5" width="5" height="5" fill="#b8ccee"/><rect x="30" y="5" width="5" height="5" fill="#7ea0dc"/><rect x="35" y="5" width="5" height="5" fill="#88a8e0"/><rect x="40" y="5" width="5" height="5" fill="#7ea0dc"/></svg>
<svg class="r" style="left:799px;top:370px" width="45" height="5" opacity="1.0"><rect x="0" y="0" width="5" height="5" fill="#e8eef8"/><rect x="5" y="0" width="5" height="5" fill="#f0f0f8"/><rect x="10" y="0" width="5" height="5" fill="#f0f0f8"/><rect x="15" y="0" width="5" height="5" fill="#e8eef8"/><rect x="20" y="0" width="5" height="5" fill="#eef2fa"/><rect x="25" y="0" width="5" height="5" fill="#e8eef8"/><rect x="30" y="0" width="5" height="5" fill="#f0f0f8"/><rect x="35" y="0" width="5" height="5" fill="#e8eef8"/><rect x="40" y="0" width="5" height="5" fill="#e8eef8"/></svg>
<div class="t" style="left:910.9px;top:360.64px;font-size:12px;line-height:12px;font-weight:400;color:#1c2237;">All</div>
<svg class="r" style="left:1002px;top:360.4px" width="50" height="10.6" opacity="1.0"><rect x="0" y="0.0" width="5" height="5.3" fill="#a8b0c4"/><rect x="5" y="0.0" width="5" height="5.3" fill="#a8b0c4"/><rect x="10" y="0.0" width="5" height="5.3" fill="#bcbccc"/><rect x="15" y="0.0" width="5" height="5.3" fill="#9aa2b8"/><rect x="20" y="0.0" width="5" height="5.3" fill="#d0d0da"/><rect x="25" y="0.0" width="5" height="5.3" fill="#b4b8c6"/><rect x="30" y="0.0" width="5" height="5.3" fill="#9aa2b8"/><rect x="35" y="0.0" width="5" height="5.3" fill="#b4b8c6"/><rect x="40" y="0.0" width="5" height="5.3" fill="#c8cad6"/><rect x="45" y="0.0" width="5" height="5.3" fill="#d0d0da"/><rect x="0" y="5.3" width="5" height="5.3" fill="#c8ccd8"/><rect x="5" y="5.3" width="5" height="5.3" fill="#c8ccd8"/><rect x="10" y="5.3" width="5" height="5.3" fill="#c8ccd8"/><rect x="15" y="5.3" width="5" height="5.3" fill="#e8e8ee"/><rect x="20" y="5.3" width="5" height="5.3" fill="#e0dde4"/><rect x="25" y="5.3" width="5" height="5.3" fill="#c8ccd8"/><rect x="30" y="5.3" width="5" height="5.3" fill="#e0dde4"/><rect x="35" y="5.3" width="5" height="5.3" fill="#cdd4e0"/><rect x="40" y="5.3" width="5" height="5.3" fill="#cdd4e0"/><rect x="45" y="5.3" width="5" height="5.3" fill="#d8d4dc"/></svg>
<div class="r" style="left:1122px;top:359.9px;width:11.7px;height:11.7px;border-radius:50%;background:#3d9a6e"></div>
<div class="t" style="left:1140.4px;top:360.74px;font-size:12px;line-height:12px;font-weight:400;color:#1c2237;">Active</div>
<div class="t" style="left:1231.9px;top:360.74px;font-size:12px;line-height:12px;font-weight:400;color:#1c2237;">2 months ago</div>
<svg class="r" style="left:1364px;top:358px" width="8" height="18"><g fill="#555"><circle cx="4" cy="3.5" r="2"/><circle cx="4" cy="9" r="2"/><circle cx="4" cy="14.4" r="2"/></g></svg>
<div class="t" style="left:1119.5px;top:405.84px;font-size:12px;line-height:12px;font-weight:400;color:#1c2237;">Rows per page:</div>
<div class="t" style="left:1220.5px;top:405.84px;font-size:12px;line-height:12px;font-weight:400;color:#1c2237;">25</div>
<svg class="r" style="left:1240.5px;top:410.5px" width="10" height="6"><path d="M0 0H9L4.5 5Z" fill="#666"/></svg>
<div class="t" style="left:1285.8px;top:405.84px;font-size:12px;line-height:12px;font-weight:400;color:#1c2237;">1-2 of 2</div>
<svg class="r" style="left:1362px;top:406px" width="56" height="13"><g stroke="#bdbdbd" stroke-width="1.6" fill="none"><path d="M8.2 1.5L2.5 6.5L8.2 11.5"/><path d="M45.5 1.5L51.2 6.5L45.5 11.5"/></g></svg>
<div class="card" style="left:324px;top:450px;width:1109px;height:113px"></div>
<div class="t" style="left:339.4px;top:466.15px;font-size:14px;line-height:14px;font-weight:400;color:#1c2237;">What you can do with Floating IP</div>
<svg class="r" style="left:339.8px;top:507.5px" width="15" height="14" viewBox="0 0 15 14"><g stroke="#2459ae" stroke-width="1.3" fill="none"><circle cx="6.5" cy="5" r="4.3"/><path d="M6.5 .7v8.6M2.2 5h8.6M6.5 .7c-2 2 -2 6.6 0 8.6M6.5 .7c2 2 2 6.6 0 8.6M6.5 9.3v2.6M.5 12h12"/></g></svg>
<div class="t" style="left:361px;top:507.42px;font-size:12.5px;line-height:12.5px;font-weight:400;color:#2459ae;">Start using Floating IP</div>
<div class="t" style="left:361px;top:524.90px;font-size:13px;line-height:13px;font-weight:400;color:#1c2237;">Redirect traffic quickly.</div>
<svg class="r" style="left:707px;top:507.5px" width="15" height="14" viewBox="0 0 15 14"><g stroke="#2459ae" stroke-width="1.3" fill="none"><circle cx="6.5" cy="5" r="4.3"/><path d="M6.5 .7v8.6M2.2 5h8.6M6.5 .7c-2 2 -2 6.6 0 8.6M6.5 .7c2 2 2 6.6 0 8.6M6.5 9.3v2.6M.5 12h12"/></g></svg>
<div class="t" style="left:728px;top:507.42px;font-size:12.5px;line-height:12.5px;font-weight:400;color:#2459ae;">Track outbound address</div>
<div class="t" style="left:728px;top:525.15px;font-size:12.7px;line-height:12.7px;font-weight:400;color:#1c2237;">Review instance IP addresses.</div>
<div class="r" style="left:1491.4px;top:414px;width:40px;height:90px;background:#f39200;border-radius:5px"></div>
<div class="t" style="left:1491px;top:427px;width:30px;height:63px;"><div style="position:absolute;left:16.6px;top:31.5px;transform:translate(-50%,-50%) rotate(-90deg);font-size:14px;line-height:14px;color:#fff;white-space:nowrap">Feedback</div></div>
<svg class="r" style="left:650px;top:452px" width="16" height="22" viewBox="650 452 16 22"><path d="M651.6 453.5V469.3L655.4 465.8L658.3 471.6L660.5 470.7L657.8 465.1H662.6Z" fill="#fff" stroke="#000" stroke-width="1" stroke-linejoin="miter"/></svg>
</body></html>
